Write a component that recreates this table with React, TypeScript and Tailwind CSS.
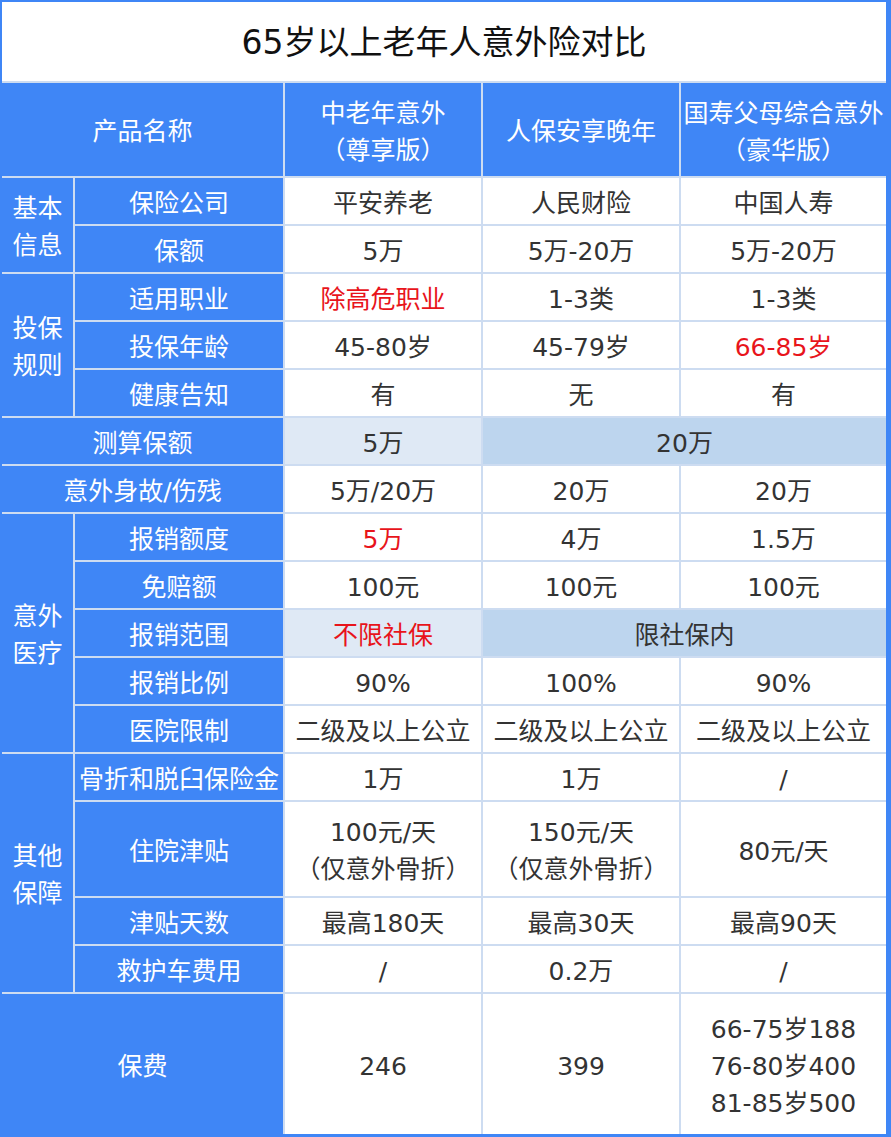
import React from "react";

const FONT = {
  fontFamily: '"DejaVu Sans", "Noto Sans CJK SC", sans-serif',
};

type CellProps = {
  children?: React.ReactNode;
  className?: string;
};

function H({ children, className = "" }: CellProps) {
  return (
    <div
      className={`flex items-center justify-center text-center bg-[#3f86f6] text-white text-[25px] leading-[37px] pt-[4px] ${className}`}
    >
      <div>{children}</div>
    </div>
  );
}

function D({ children, className = "" }: CellProps) {
  return (
    <div
      className={`flex items-center justify-center text-center text-[#333333] text-[25px] leading-[37px] pt-[4px] ${className}`}
    >
      <div>{children}</div>
    </div>
  );
}

const W = "bg-white";
const L = "bg-[#dfe9f5]";
const M = "bg-[#bdd5ee]";
const RED = "text-[#e8141b]";

export default function App() {
  return (
    <div
      style={FONT}
      className="w-[891px] h-[1137px] bg-[#3f86f6] pt-[2px] pl-[2px] pr-[5px] pb-[3px]"
    >
      <div className="grid grid-cols-[71px_208px_196px_196px_205px] grid-rows-[79px_93px_repeat(13,46px)_94px_46px_46px_140px] gap-[2px] bg-[#cddcf1] w-[884px] h-[1132px]">
        {/* Title */}
        <div className="col-span-5 bg-white flex items-center justify-center text-[33px] text-[#111111] pt-[2px]">
          65岁以上老年人意外险对比
        </div>

        {/* Header */}
        <H className="col-span-2">产品名称</H>
        <H>
          中老年意外
          <br />
          （尊享版）
        </H>
        <H>人保安享晚年</H>
        <H>
          国寿父母综合意外
          <br />
          （豪华版）
        </H>

        {/* 基本信息 */}
        <H className="row-span-2">
          基本
          <br />
          信息
        </H>
        <H>保险公司</H>
        <D className={W}>平安养老</D>
        <D className={W}>人民财险</D>
        <D className={W}>中国人寿</D>

        <H>保额</H>
        <D className={W}>5万</D>
        <D className={W}>5万-20万</D>
        <D className={W}>5万-20万</D>

        {/* 投保规则 */}
        <H className="row-span-3">
          投保
          <br />
          规则
        </H>
        <H>适用职业</H>
        <D className={`${W} ${RED}`}>除高危职业</D>
        <D className={W}>1-3类</D>
        <D className={W}>1-3类</D>

        <H>投保年龄</H>
        <D className={W}>45-80岁</D>
        <D className={W}>45-79岁</D>
        <D className={`${W} ${RED}`}>66-85岁</D>

        <H>健康告知</H>
        <D className={W}>有</D>
        <D className={W}>无</D>
        <D className={W}>有</D>

        {/* 测算保额 */}
        <H className="col-span-2">测算保额</H>
        <D className={L}>5万</D>
        <D className={`${M} col-span-2`}>20万</D>

        <H className="col-span-2">意外身故/伤残</H>
        <D className={W}>5万/20万</D>
        <D className={W}>20万</D>
        <D className={W}>20万</D>

        {/* 意外医疗 */}
        <H className="row-span-5">
          意外
          <br />
          医疗
        </H>
        <H>报销额度</H>
        <D className={`${W} ${RED}`}>5万</D>
        <D className={W}>4万</D>
        <D className={W}>1.5万</D>

        <H>免赔额</H>
        <D className={W}>100元</D>
        <D className={W}>100元</D>
        <D className={W}>100元</D>

        <H>报销范围</H>
        <D className={`${L} ${RED}`}>不限社保</D>
        <D className={`${M} col-span-2`}>限社保内</D>

        <H>报销比例</H>
        <D className={W}>90%</D>
        <D className={W}>100%</D>
        <D className={W}>90%</D>

        <H>医院限制</H>
        <D className={W}>二级及以上公立</D>
        <D className={W}>二级及以上公立</D>
        <D className={W}>二级及以上公立</D>

        {/* 其他保障 */}
        <H className="row-span-4">
          其他
          <br />
          保障
        </H>
        <H>骨折和脱臼保险金</H>
        <D className={W}>1万</D>
        <D className={W}>1万</D>
        <D className={W}>/</D>

        <H>住院津贴</H>
        <D className={W}>
          100元/天
          <br />
          （仅意外骨折）
        </D>
        <D className={W}>
          150元/天
          <br />
          （仅意外骨折）
        </D>
        <D className={W}>80元/天</D>

        <H>津贴天数</H>
        <D className={W}>最高180天</D>
        <D className={W}>最高30天</D>
        <D className={W}>最高90天</D>

        <H>救护车费用</H>
        <D className={W}>/</D>
        <D className={W}>0.2万</D>
        <D className={W}>/</D>

        {/* 保费 */}
        <H className="col-span-2">保费</H>
        <D className={W}>246</D>
        <D className={W}>399</D>
        <D className={W}>
          66-75岁188
          <br />
          76-80岁400
          <br />
          81-85岁500
        </D>
      </div>
    </div>
  );
}
